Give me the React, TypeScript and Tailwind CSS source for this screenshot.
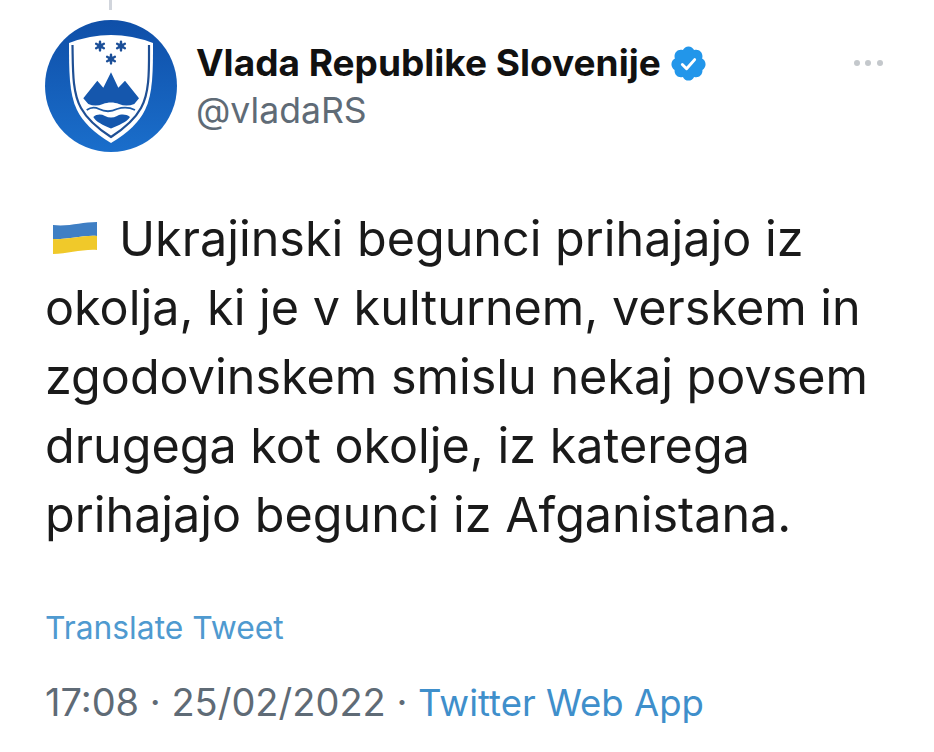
const font = { fontFamily: '"Inter", "Liberation Sans", sans-serif' };

function Crest() {
  return (
    <svg viewBox="0 0 132 132" className="h-[132px] w-[132px] shrink-0">
      <defs>
        <linearGradient id="crestBg" x1="0" y1="0" x2="0" y2="1">
          <stop offset="0" stopColor="#0f4fa8" />
          <stop offset="1" stopColor="#1a6ecb" />
        </linearGradient>
      </defs>
      <circle cx="66" cy="66" r="66" fill="url(#crestBg)" />
      <path d="M24 23Q66 7 108 23C108 50 108 74 100 90C94 102 84 112 66 123C48 112 38 102 32 90C24 74 24 50 24 23Z" fill="#fff" />
      <path d="M27.5 25C28 48 27 72 36 88C42 99 52 108 66 117C80 108 90 99 96 88C105 72 104 48 104 25" fill="none" stroke="#1f4f94" strokeWidth="2.2" />
      <path d="M38.3 78.3L52.3 60.7L58.3 67.7L66 52.3L73.3 67.7L80 60.7L94 78.3L89.3 84C84 86 79 86 74 84C69 82 63 82 58 84C53 86 48 86 43.3 84Z" fill="#1557ad" />
      <path d="M41.7 90C46 87 50 87 54 89C60 92 66 92 72 89C78 87 84 87 90 90" fill="none" stroke="#1d5aa6" strokeWidth="1.8" />
      <path d="M48.3 97C52 94 56 94 60 96C64 98 68 98 72 96C76 94 81 94 85 97C82 102 74 105 66 108.5C58 105 51 102 48.3 97Z" fill="#1557ad" />
      {[[55, 26], [76, 26], [66, 39]].map(([x, y]) => (
        <g key={`${x}-${y}`} stroke="#1c4f98" strokeWidth="2.4" strokeLinecap="round" fill="#1c4f98">
          <path d={`M${x} ${y - 4.4}V${y + 4.4}M${x - 3.9} ${y - 2.2}L${x + 3.9} ${y + 2.2}M${x - 3.9} ${y + 2.2}L${x + 3.9} ${y - 2.2}`} />
          <circle cx={x} cy={y} r="1.6" />
        </g>
      ))}
    </svg>
  );
}

function Verified() {
  return (
    <svg viewBox="0 0 24 24" className="h-[39px] w-[39px] shrink-0">
      <path
        fill="#2296ea"
        d="M22.5 12.5c0-1.58-.875-2.95-2.148-3.6.154-.435.238-.905.238-1.4 0-2.21-1.71-3.998-3.818-3.998-.47 0-.92.084-1.336.25C14.818 2.415 13.51 1.5 12 1.5s-2.816.917-3.437 2.25c-.415-.165-.866-.25-1.336-.25-2.11 0-3.818 1.79-3.818 4 0 .494.083.964.237 1.4-1.272.65-2.147 2.018-2.147 3.6 0 1.495.782 2.798 1.942 3.486-.02.17-.032.34-.032.514 0 2.21 1.708 4 3.818 4 .47 0 .92-.086 1.335-.25.62 1.334 1.926 2.25 3.437 2.25 1.512 0 2.818-.916 3.437-2.25.415.163.865.248 1.336.248 2.11 0 3.818-1.79 3.818-4 0-.174-.012-.344-.033-.513 1.158-.687 1.943-1.99 1.943-3.484z"
      />
      <path fill="none" stroke="#fff" strokeWidth="1.8" strokeLinecap="round" strokeLinejoin="round" d="M8.2 12.6l2.6 2.6 5-5.6" />
    </svg>
  );
}

function UkraineFlag() {
  return (
    <svg viewBox="0 0 46 34" className="ml-[7px] mr-[21px] inline-block h-[34px] w-[46px] align-[1px]">
      <path d="M1 4C16 6 30 1 45 1V15C30 14 16 19 1 18Z" fill="#3f7fc4" />
      <path d="M1 18C16 19 30 14 45 15V29C30 28 16 33 1 33Z" fill="#f0c92a" />
    </svg>
  );
}

export default function App() {
  return (
    <div className="h-[752px] w-[934px] overflow-hidden bg-white" style={font}>
      <div className="ml-[109px] h-[10px] w-[3px] bg-gray-300" />
      <div className="pl-[45px] pr-[36px] pt-[10px]">
        <div className="flex items-start gap-[19px]">
          <Crest />
          <div className="flex-1 pt-[18px]">
            <div className="flex items-center justify-between">
              <div className="flex items-center gap-[8px]">
                <span className="text-[37px] font-bold leading-[50px] text-[#111]">Vlada Republike Slovenije</span>
                <Verified />
              </div>
              <div className="flex gap-[5.7px] pr-[15px]">
                <span className="h-[6px] w-[6px] rounded-full bg-[#c4c8cc]" />
                <span className="h-[6px] w-[6px] rounded-full bg-[#c4c8cc]" />
                <span className="h-[6px] w-[6px] rounded-full bg-[#c4c8cc]" />
              </div>
            </div>
            <div className="text-[35.6px] leading-[46px] text-[#5f6b76]">@vladaRS</div>
          </div>
        </div>
        <p className="mt-[52px] whitespace-pre text-[48.5px] leading-[69px] text-[#1a1a1a]">
          <UkraineFlag />
          {"Ukrajinski begunci prihajajo iz\nokolja, ki je v kulturnem, verskem in\nzgodovinskem smislu nekaj povsem\ndrugega kot okolje, iz katerega\nprihajajo begunci iz Afganistana."}
        </p>
        <div className="mt-[58px] text-[31.8px] leading-[42px] text-[#4f9ad0]">Translate Tweet</div>
        <div className="mt-[29px] text-[38px] leading-[48px] text-[#5f6b76]">
          17:08 · 25/02/2022 · <span className="text-[36.5px] text-[#3f8fcb]">Twitter Web App</span>
        </div>
      </div>
    </div>
  );
}
